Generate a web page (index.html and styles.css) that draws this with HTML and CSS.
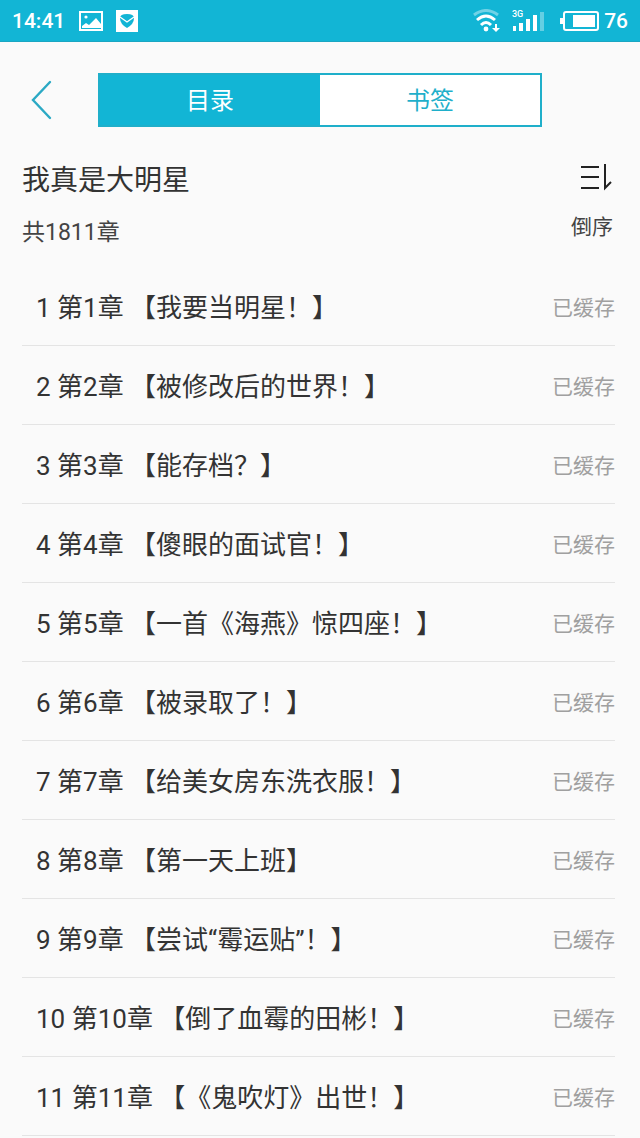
FILE: index.html
```html
<!DOCTYPE html>
<html lang="zh-CN">
<head>
<meta charset="utf-8">
<meta name="viewport" content="width=device-width, initial-scale=1">
<title>我真是大明星</title>
<link rel="stylesheet" href="styles.css">
</head>
<body>

<div class="statusbar">
  <span class="time">14:41</span>
  <svg width="24" height="20" viewBox="0 0 24 20">
    <path fill="#fff" fill-rule="evenodd" d="M0 0h24v20H0zM2 2v16h20V2z"/>
    <circle cx="7" cy="6" r="1.6" fill="#fff"/>
    <path fill="#fff" d="M3 17v-2l4-3 3 2 7-7 5 6v4z"/>
  </svg>
  <svg class="mail" width="22" height="22" viewBox="0 0 22 22">
    <path fill="#fff" d="M0 0h22v22H0z"/>
    <path fill="#12b5d5" d="M4 8q0-4 7-4t7 4q0 6-7 10q-7-4-7-10z"/>
    <path fill="none" stroke="#fff" stroke-width="1.4" d="M4 7l7 5 7-5"/>
  </svg>
  <div class="right">
    <svg width="28" height="24" viewBox="0 0 28 24">
      <g fill="none" stroke="#fff" stroke-width="3">
        <path stroke-opacity=".4" d="M1 6q12-9 24 0"/>
        <path d="M4 11q9-8 18 0"/>
        <path d="M8 16q5-5 10 0"/>
      </g>
      <circle cx="13" cy="20" r="2.4" fill="#fff"/>
      <path fill="#fff" d="M22 15h2v4h3l-4 4-4-4h3z"/>
    </svg>
    <svg class="signal" width="34" height="22" viewBox="0 0 34 22">
      <text x="0" y="7" fill="#fff" font-size="9" font-weight="500">3G</text>
      <path fill="#fff" d="M1 16h3v5H1zM7 13h4v8H7zM14 9h4v12h-4zM21 5h4v16h-4z"/>
      <path fill="#fff" fill-opacity=".35" d="M28 2h4v19h-4z"/>
    </svg>
    <svg width="40" height="20" viewBox="0 0 40 20">
      <rect x="4" y="1" width="34" height="18" rx="2" fill="none" stroke="#fff" stroke-width="2"/>
      <path fill="#fff" d="M0 7h3v6H0zM13 4h22v12H13z"/>
    </svg>
    <span class="battery">76</span>
  </div>
</div>

<div class="header">
  <button class="back" aria-label="返回">
    <svg width="22" height="40" viewBox="0 0 22 40">
      <path fill="none" stroke="#2ba9c4" stroke-width="2.4" stroke-linecap="round" d="M19 2L2 20l17 18"/>
    </svg>
  </button>
  <div class="tabs">
    <button class="tab active">目录</button>
    <button class="tab">书签</button>
  </div>
</div>

<div class="book">
  <div>
    <h1>我真是大明星</h1>
    <p>共1811章</p>
  </div>
  <button class="sort">
    <svg width="34" height="28" viewBox="0 0 34 28">
      <path fill="none" stroke="#222" stroke-width="2" d="M2 4h18M2 14h18M2 25h18M26 1v24l6-6"/>
    </svg>
    倒序
  </button>
</div>

<ul class="list">
  <li><a href="#1">1 第1章 【我要当明星！】</a><span>已缓存</span></li>
  <li><a href="#2">2 第2章 【被修改后的世界！】</a><span>已缓存</span></li>
  <li><a href="#3">3 第3章 【能存档？】</a><span>已缓存</span></li>
  <li><a href="#4">4 第4章 【傻眼的面试官！】</a><span>已缓存</span></li>
  <li><a href="#5">5 第5章 【一首《海燕》惊四座！】</a><span>已缓存</span></li>
  <li><a href="#6">6 第6章 【被录取了！】</a><span>已缓存</span></li>
  <li><a href="#7">7 第7章 【给美女房东洗衣服！】</a><span>已缓存</span></li>
  <li><a href="#8">8 第8章 【第一天上班】</a><span>已缓存</span></li>
  <li><a href="#9">9 第9章 【尝试“霉运贴”！】</a><span>已缓存</span></li>
  <li><a href="#10">10 第10章 【倒了血霉的田彬！】</a><span>已缓存</span></li>
  <li><a href="#11">11 第11章 【《鬼吹灯》出世！】</a><span>已缓存</span></li>
</ul>

</body>
</html>
```
FILE: styles.css
```css
* {
  box-sizing: border-box;
}
body {
  margin: 0;
  background: #fafafa;
  color: #333;
  font-family: Roboto, "Noto Sans CJK SC", sans-serif;
  text-spacing-trim: space-all;
}
button {
  font-family: inherit;
  border: 0;
  padding: 0;
  background: none;
  cursor: pointer;
}
svg {
  display: block;
}

.statusbar {
  display: flex;
  align-items: center;
  height: 42px;
  padding: 0 12px;
  background: #12b5d5;
  border-bottom: 1px solid #1ba6c2;
  color: #fff;
  font-size: 21px;
  font-weight: 500;
}
.time {
  margin-right: 14px;
}
.mail {
  margin-left: 13px;
}
.right {
  display: flex;
  align-items: center;
  margin-left: auto;
}
.signal {
  margin: 0 14px 0 11px;
}
.battery {
  margin-left: 4px;
}

.header {
  display: flex;
  align-items: center;
  padding: 31px 98px 0 31px;
}
.back {
  width: 67px;
}
.tabs {
  display: flex;
  flex: 1;
  height: 54px;
  border: 2px solid #1fafca;
  background: #fff;
}
.tab {
  flex: 1;
  padding-bottom: 3px;
  font-size: 24px;
  color: #1fafca;
}
.tab.active {
  background: #12b5d5;
  color: #fff;
}

.book {
  display: flex;
  justify-content: space-between;
  padding: 32px 27px 0 22px;
}
.book h1 {
  margin: 0;
  font-size: 28px;
  font-weight: normal;
  line-height: 44px;
}
.book p {
  margin: 12px 0 0;
  font-size: 23px;
  line-height: 36px;
  color: #444;
}
.sort {
  display: flex;
  flex-direction: column;
  align-items: flex-end;
  gap: 20px;
  align-self: flex-start;
  padding-top: 4px;
  font-size: 21px;
  line-height: 32px;
  color: #444;
}

.list {
  list-style: none;
  margin: 16px 25px 0 22px;
  padding: 0;
}
.list li {
  display: flex;
  align-items: center;
  justify-content: space-between;
  height: 79px;
  padding: 0 0 1px 14px;
  border-bottom: 1px solid #e4e4e4;
}
.list a {
  color: #333;
  font-size: 26px;
  text-decoration: none;
}
.list span {
  color: #a0a0a0;
  font-size: 21px;
}
```
